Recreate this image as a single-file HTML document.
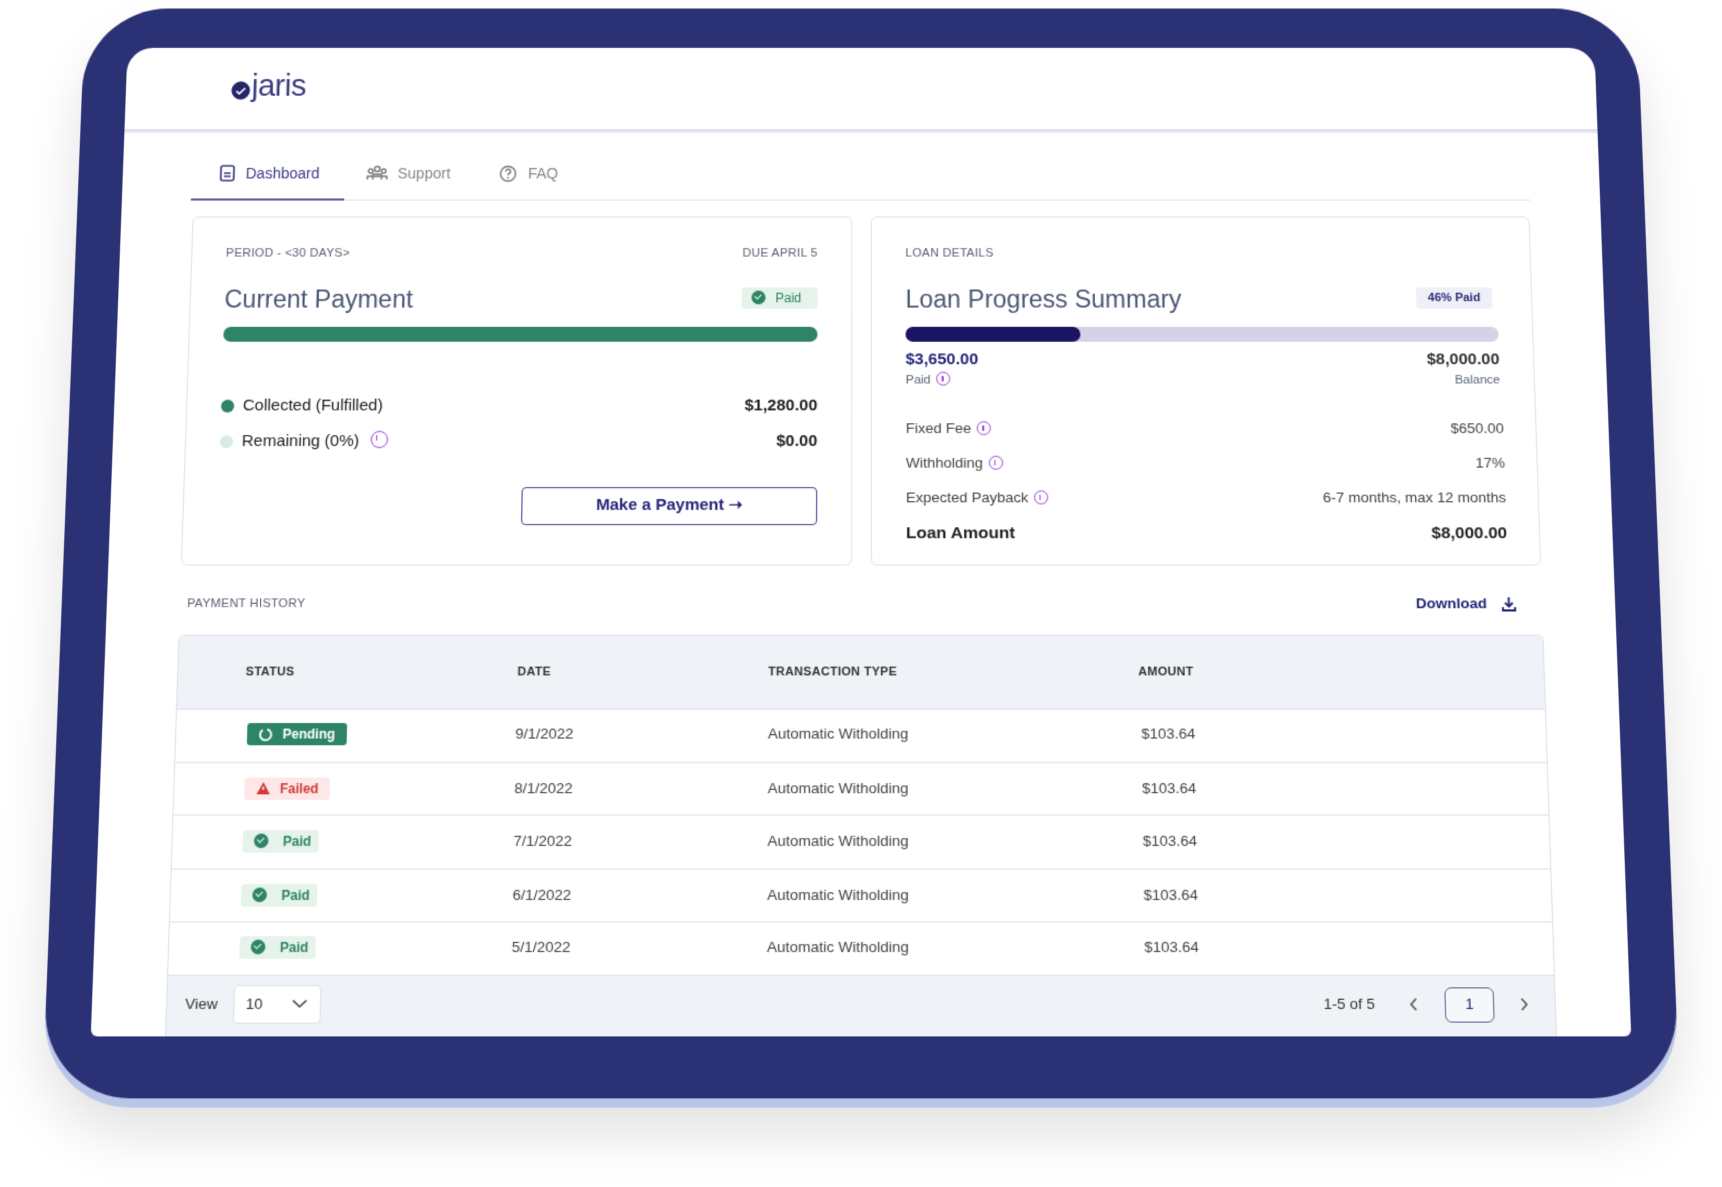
<!DOCTYPE html>
<html><head><meta charset="utf-8"><style>
*{box-sizing:border-box;margin:0;padding:0}
html,body{width:1722px;height:1172px;overflow:hidden;background:#fff;font-family:"Liberation Sans",sans-serif}
#wrap{position:absolute;left:0;top:0;width:1568px;height:1067px;transform:scale(1.0982);transform-origin:0 0}
#stage{position:absolute;left:0;top:0;width:1568px;height:1067px;perspective:2000px;perspective-origin:784px 504px}
#tab{position:absolute;left:0;top:0;width:1568px;height:1067px;transform-origin:784px 504px;transform:rotateX(6.2deg)}
.a{position:absolute}
.t{position:absolute;line-height:20px;height:20px;white-space:nowrap}
.frame{left:58px;top:-9px;width:1452px;height:999px;background:#2b3175;border-radius:78px;box-shadow:0 8px 0 #b9c6ea,0 30px 50px rgba(0,0,0,.12)}
.screen{left:99px;top:29px;width:1370px;height:907px;background:#fff;border-radius:24px 24px 6px 6px;overflow:hidden}
.card{border:1px solid #dfe3ec;border-radius:6px;background:#fff}
.lab{font-size:11px;color:#5a6070;letter-spacing:.3px}
.title{font-size:23px;color:#4b5875;line-height:30px;height:30px}
.badge{border-radius:3px;font-size:12px;line-height:20px;height:20px}
.row{font-size:13.5px;color:#444}
.th{font-size:11px;color:#333;font-weight:bold;letter-spacing:.3px}
.hl{height:1px;background:#dde2ea}
.info{display:inline-block;width:13px;height:13px;border:1.5px solid #a24ee0;border-radius:50%;vertical-align:-2px;margin-left:5px;position:relative}
.info:after{content:"";position:absolute;left:4px;top:3px;width:1.5px;height:5px;background:#a24ee0}
.chk{display:inline-block;width:13px;height:13px;border-radius:50%;background:#2e8467;vertical-align:-2px;position:relative;margin-right:9px}
.chk:after{content:"";position:absolute;left:3px;top:3px;width:5px;height:3px;border-left:1.6px solid #e6f3ea;border-bottom:1.6px solid #e6f3ea;transform:rotate(-45deg)}
</style></head><body>
<div id="wrap"><div id="stage"><div id="tab">
<div class="a frame"></div>
<div class="a screen"></div>
<div class="a" style="left:99px;top:107px;width:1370px;height:4px;background:linear-gradient(#d7d6e6,#f3f3f8)"></div>
<svg class="a" style="left:196px;top:60px" width="20" height="20" viewBox="0 0 22 22"><circle cx="11" cy="11" r="9.5" fill="#25256e"/><path d="M6.5 11.5l3 3 6-6" stroke="#fff" stroke-width="1.8" fill="none"/></svg>
<div class="t" style="left:216px;top:48px;font-size:29px;line-height:36px;height:36px;color:#3a3c80;letter-spacing:-.5px">jaris</div>
<svg class="a" style="left:189px;top:141px" width="14" height="16" viewBox="0 0 14 16"><rect x="1" y="1" width="12" height="14" rx="2" fill="none" stroke="#3a3a88" stroke-width="1.6"/><path d="M4 8h6M4 11h6" stroke="#3a3a88" stroke-width="1.5"/></svg>
<div class="t" style="left:213px;top:139px;font-size:14px;color:#3a3a88">Dashboard</div>
<svg class="a" style="left:325px;top:141px" width="20" height="16" viewBox="0 0 20 16"><circle cx="10" cy="4" r="2.5" fill="none" stroke="#777" stroke-width="1.4"/><circle cx="4" cy="6" r="2" fill="none" stroke="#777" stroke-width="1.4"/><circle cx="16" cy="6" r="2" fill="none" stroke="#777" stroke-width="1.4"/><path d="M1 14v-3h18v3M6 14v-5h8v5" fill="none" stroke="#777" stroke-width="1.4"/></svg>
<div class="t" style="left:354px;top:139px;font-size:14px;color:#888">Support</div>
<svg class="a" style="left:448px;top:141px" width="17" height="17" viewBox="0 0 17 17"><circle cx="8.5" cy="8.5" r="7" fill="none" stroke="#777" stroke-width="1.4"/><path d="M6.3 6.5a2.2 2.2 0 1 1 3 2c-.7.3-.8.8-.8 1.6" fill="none" stroke="#777" stroke-width="1.4"/><circle cx="8.5" cy="12.3" r=".9" fill="#777"/></svg>
<div class="t" style="left:475px;top:139px;font-size:14px;color:#888">FAQ</div>
<div class="a" style="left:163px;top:174px;width:1241px;height:1px;background:#dfe2ea"></div>
<div class="a" style="left:163px;top:173px;width:142px;height:2px;background:#5b5aa0"></div>
<div class="a card" style="left:165px;top:190px;width:611px;height:325px"></div>
<div class="t lab" style="left:197px;top:215px">PERIOD - &lt;30 DAYS&gt;</div>
<div class="t lab" style="left:664px;top:215px;width:80px;text-align:right">DUE APRIL 5</div>
<div class="t title" style="left:197px;top:253px">Current Payment</div>
<div class="a badge" style="left:674px;top:257px;width:70px;background:#e6f3ea;color:#2e8467;padding-left:9px"><span class="chk"></span>Paid</div>
<div class="a" style="left:197px;top:294px;width:547px;height:14px;background:#2e8467;border-radius:7px"></div>
<div class="a" style="left:197px;top:362px;width:12px;height:12px;border-radius:50%;background:#2e8467"></div>
<div class="t" style="left:217px;top:358px;font-size:15px;color:#222">Collected (Fulfilled)</div>
<div class="t" style="left:600px;top:358px;width:144px;text-align:right;font-size:15px;color:#222;font-weight:bold">$1,280.00</div>
<div class="a" style="left:197px;top:395px;width:12px;height:12px;border-radius:50%;background:#d8ece4"></div>
<div class="t" style="left:217px;top:391px;font-size:15px;color:#222">Remaining (0%)<span class="info" style="margin-left:10px;width:16px;height:16px"></span></div>
<div class="t" style="left:600px;top:391px;width:144px;text-align:right;font-size:15px;color:#222;font-weight:bold">$0.00</div>
<div class="a" style="left:474px;top:443px;width:270px;height:35px;border:1.5px solid #4a4898;border-radius:4px;text-align:center;line-height:32px;font-size:15px;font-weight:bold;color:#25257a">Make a Payment &#10141;</div>
<div class="a card" style="left:793px;top:190px;width:610px;height:325px"></div>
<div class="t lab" style="left:825px;top:215px">LOAN DETAILS</div>
<div class="t title" style="left:825px;top:253px">Loan Progress Summary</div>
<div class="a badge" style="left:1296px;top:257px;width:70px;background:#eef0f7;color:#2b2b78;font-weight:bold;font-size:11px;text-align:center">46% Paid</div>
<div class="a" style="left:825px;top:294px;width:546px;height:14px;background:#d5d2e6;border-radius:7px"></div>
<div class="a" style="left:825px;top:294px;width:161px;height:14px;background:#1a1464;border-radius:7px"></div>
<div class="t" style="left:825px;top:315px;font-size:15px;font-weight:bold;color:#25257a">$3,650.00</div>
<div class="t" style="left:825px;top:334px;font-size:11.5px;color:#5a6478">Paid<span class="info"></span></div>
<div class="t" style="left:1220px;top:315px;width:151px;text-align:right;font-size:15px;font-weight:bold;color:#333">$8,000.00</div>
<div class="t" style="left:1220px;top:334px;width:151px;text-align:right;font-size:11.5px;color:#5a6478">Balance</div>
<div class="t" style="left:825px;top:379px;font-size:13.5px;color:#444">Fixed Fee<span class="info"></span></div>
<div class="t" style="left:1100px;top:379px;width:273px;text-align:right;font-size:13.5px;color:#444">$650.00</div>
<div class="t" style="left:825px;top:411px;font-size:13.5px;color:#444">Withholding<span class="info"></span></div>
<div class="t" style="left:1100px;top:411px;width:273px;text-align:right;font-size:13.5px;color:#444">17%</div>
<div class="t" style="left:825px;top:443px;font-size:13.5px;color:#444">Expected Payback<span class="info"></span></div>
<div class="t" style="left:1100px;top:443px;width:273px;text-align:right;font-size:13.5px;color:#444">6-7 months, max 12 months</div>
<div class="t" style="left:825px;top:476px;font-size:15.5px;font-weight:bold;color:#222">Loan Amount</div>
<div class="t" style="left:1100px;top:476px;width:273px;text-align:right;font-size:15.5px;font-weight:bold;color:#222">$8,000.00</div>
<div class="t lab" style="left:172px;top:540px">PAYMENT HISTORY</div>
<div class="t" style="left:1288px;top:540px;font-size:13.5px;font-weight:bold;color:#25257a">Download</div>
<svg class="a" style="left:1366px;top:543px" width="13" height="14" viewBox="0 0 13 14"><path d="M6.5 1v8M3 6l3.5 3.5L10 6M1 10v3h11v-3" fill="none" stroke="#25257a" stroke-width="1.8"/></svg>
<div class="a" style="left:165px;top:578px;width:1238px;height:358px;border:1px solid #dde2ea;border-bottom:none;border-radius:6px 6px 0 0;background:#fff"></div>
<div class="a" style="left:166px;top:579px;width:1236px;height:66px;background:#eff2f7;border-radius:6px 6px 0 0"></div>
<div class="t th" style="left:227px;top:602px">STATUS</div>
<div class="t th" style="left:473px;top:602px">DATE</div>
<div class="t th" style="left:700px;top:602px">TRANSACTION TYPE</div>
<div class="t th" style="left:1035px;top:602px">AMOUNT</div>
<div class="a hl" style="left:165px;top:645px;width:1238px"></div>
<div class="a hl" style="left:165px;top:693px;width:1238px"></div>
<div class="a hl" style="left:165px;top:740px;width:1238px"></div>
<div class="a hl" style="left:165px;top:788px;width:1238px"></div>
<div class="a hl" style="left:165px;top:835px;width:1238px"></div>
<div class="a hl" style="left:165px;top:882px;width:1238px"></div>
<div class="a" style="left:166px;top:883px;width:1236px;height:53px;background:#eff2f7"></div>
<div class="a badge" style="left:230px;top:658px;width:90px;background:#2e8467;color:#fff;font-weight:bold;padding-left:32px">Pending</div>
<svg class="a" style="left:240px;top:662px" width="13" height="13" viewBox="0 0 13 13"><path d="M4 2.2A5 5 0 1 0 8 1.6" fill="none" stroke="#fff" stroke-width="1.8"/></svg>
<div class="a badge" style="left:229px;top:707px;width:77px;background:#fde7e7;color:#d23b3b;font-weight:bold;padding-left:32px">Failed</div>
<svg class="a" style="left:239px;top:710px" width="14" height="13" viewBox="0 0 14 13"><path d="M7 1L13 12H1z" fill="#d23b3b"/><path d="M7 5v3" stroke="#fde7e7" stroke-width="1.5"/></svg>
<div class="a badge" style="left:229px;top:754px;width:68px;background:#e6f3ea;color:#2e8467;font-weight:bold;padding-left:10px"><span class="chk" style="margin-right:13px"></span>Paid</div>
<div class="a badge" style="left:229px;top:802px;width:68px;background:#e6f3ea;color:#2e8467;font-weight:bold;padding-left:10px"><span class="chk" style="margin-right:13px"></span>Paid</div>
<div class="a badge" style="left:229px;top:848px;width:68px;background:#e6f3ea;color:#2e8467;font-weight:bold;padding-left:10px"><span class="chk" style="margin-right:13px"></span>Paid</div>
<div class="t row" style="left:472px;top:658px">9/1/2022</div>
<div class="t row" style="left:472px;top:707px">8/1/2022</div>
<div class="t row" style="left:472px;top:754px">7/1/2022</div>
<div class="t row" style="left:472px;top:802px">6/1/2022</div>
<div class="t row" style="left:472px;top:848px">5/1/2022</div>
<div class="t row" style="left:700px;top:658px">Automatic Witholding</div>
<div class="t row" style="left:700px;top:707px">Automatic Witholding</div>
<div class="t row" style="left:700px;top:754px">Automatic Witholding</div>
<div class="t row" style="left:700px;top:802px">Automatic Witholding</div>
<div class="t row" style="left:700px;top:848px">Automatic Witholding</div>
<div class="t row" style="left:1037px;top:658px">$103.64</div>
<div class="t row" style="left:1037px;top:707px">$103.64</div>
<div class="t row" style="left:1037px;top:754px">$103.64</div>
<div class="t row" style="left:1037px;top:802px">$103.64</div>
<div class="t row" style="left:1037px;top:848px">$103.64</div>
<div class="t row" style="left:182px;top:898px;color:#333">View</div>
<div class="a" style="left:225px;top:891px;width:78px;height:34px;background:#fff;border:1px solid #dde2ea;border-radius:4px"></div>
<div class="t row" style="left:236px;top:898px;color:#333">10</div>
<svg class="a" style="left:277px;top:903px" width="14" height="9" viewBox="0 0 14 9"><path d="M1 1.5l6 5.5 6-5.5" fill="none" stroke="#445" stroke-width="1.6"/></svg>
<div class="t row" style="left:1196px;top:898px;color:#333">1-5 of 5</div>
<svg class="a" style="left:1272px;top:902px" width="8" height="12" viewBox="0 0 8 12"><path d="M6.5 1L2 6l4.5 5" fill="none" stroke="#555" stroke-width="1.5"/></svg>
<div class="a" style="left:1304px;top:893px;width:44px;height:31px;border:1.5px solid #6a6a9a;border-radius:6px;text-align:center;line-height:28px;font-size:13.5px;color:#25257a;background:#f6f7fb">1</div>
<svg class="a" style="left:1371px;top:902px" width="8" height="12" viewBox="0 0 8 12"><path d="M1.5 1L6 6l-4.5 5" fill="none" stroke="#555" stroke-width="1.5"/></svg>
</div></div></div>
</body></html>
